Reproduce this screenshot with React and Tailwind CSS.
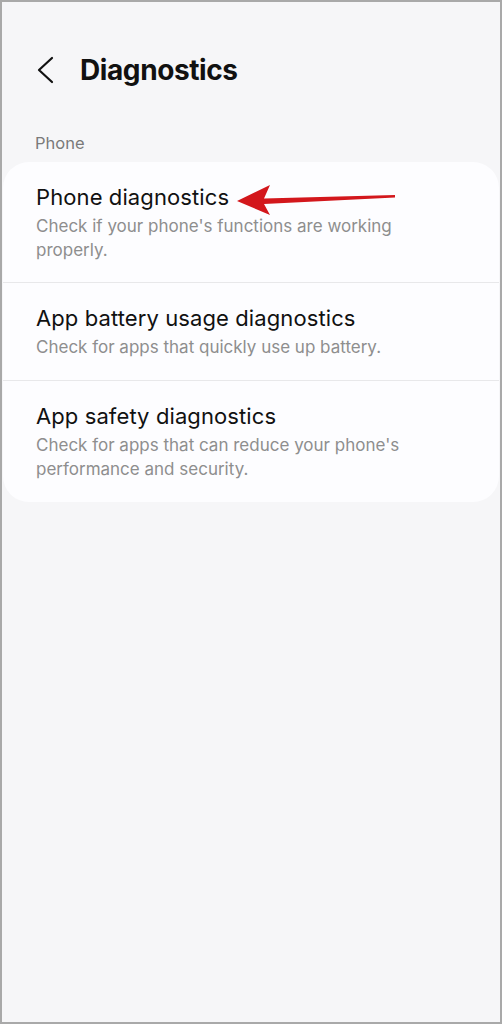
import React from "react";

const items = [
  {
    title: "Phone diagnostics",
    desc: "Check if your phone's functions are working properly.",
  },
  {
    title: "App battery usage diagnostics",
    desc: "Check for apps that quickly use up battery.",
  },
  {
    title: "App safety diagnostics",
    desc: "Check for apps that can reduce your phone's performance and security.",
  },
];

const App = () => {
  return (
    <div
      className="relative h-[1024px] w-full border-2 border-[#a9a9a9] bg-[#f6f6f8] overflow-hidden"
      style={{ fontFamily: "Inter, Roboto, 'Noto Sans', sans-serif" }}
    >
      {/* header */}
      <div className="flex items-center h-[64px] mt-[36px] pl-[34px]">
        <svg width="20" height="28" viewBox="0 0 20 28" className="text-[#111]">
          <path
            d="M16 2 L3 14 L16 26"
            fill="none"
            stroke="currentColor"
            strokeWidth="2.2"
            strokeLinecap="round"
            strokeLinejoin="round"
          />
        </svg>
        <h1 className="ml-[24px] text-[28px] font-bold text-[#111] tracking-[-0.4px]">
          Diagnostics
        </h1>
      </div>

      <div className="pl-[33px] mt-[29px] text-[16.5px] text-[#7a7a7a] leading-[24px]">
        Phone
      </div>

      {/* card */}
      <div className="mt-[7px] mx-px rounded-[26px] bg-[#fdfdff]">
        {items.map((item, i) => (
          <div
            key={item.title}
            className={`pl-[33px] pr-[34px] pt-[20px] ${
              i > 0 ? "border-t border-[#e8e8ea] pb-[21px]" : "pb-[20px]"
            }`}
          >
            <div className="text-[22px] leading-[30px] text-[#111] tracking-[0.1px]">
              {item.title}
            </div>
            <div className="mt-[2px] text-[17px] leading-[24px] text-[#8e8e8e] pr-[20px]">
              {item.desc}
            </div>
          </div>
        ))}
      </div>

      {/* red arrow annotation */}
      <svg
        className="absolute left-0 top-0"
        width="502"
        height="1024"
        viewBox="0 0 502 1024"
      >
        <polygon
          points="235,199 268,183 262,196.5 393,193 393,195.5 262,202 268,213"
          fill="#d3171c"
        />
      </svg>
    </div>
  );
};

export default App;
